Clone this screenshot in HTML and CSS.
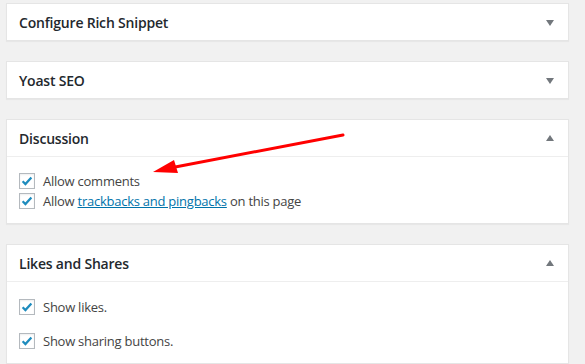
FILE: index.html
```html
<!DOCTYPE html>
<html lang="en">
<head>
  <meta charset="UTF-8" />
  <title>Post boxes</title>
  <link rel="stylesheet" href="styles.css">
</head>
<body>
  <div class="boxes">
    <div class="postbox closed">
      <h2>Configure Rich Snippet <span class="toggle down"></span></h2>
    </div>

    <div class="postbox closed">
      <h2>Yoast SEO <span class="toggle down"></span></h2>
    </div>

    <div class="postbox">
      <h2>Discussion <span class="toggle up"></span></h2>
      <div class="inside discussion">
        <label class="check">
          <span class="box"><svg viewBox="0 0 16 16" width="14" height="14"><path d="M3 8.2l3.2 3.3L13 4" fill="none" stroke="#1e8cbe" stroke-width="2.6"/></svg></span>
          <span>Allow comments</span>
        </label>
        <label class="check">
          <span class="box"><svg viewBox="0 0 16 16" width="14" height="14"><path d="M3 8.2l3.2 3.3L13 4" fill="none" stroke="#1e8cbe" stroke-width="2.6"/></svg></span>
          <span>Allow <a href="#">trackbacks and pingbacks</a> on this page</span>
        </label>
      </div>
    </div>

    <div class="postbox">
      <h2>Likes and Shares <span class="toggle up"></span></h2>
      <div class="inside likes">
        <label class="check">
          <span class="box"><svg viewBox="0 0 16 16" width="14" height="14"><path d="M3 8.2l3.2 3.3L13 4" fill="none" stroke="#1e8cbe" stroke-width="2.6"/></svg></span>
          <span>Show likes.</span>
        </label>
        <label class="check">
          <span class="box"><svg viewBox="0 0 16 16" width="14" height="14"><path d="M3 8.2l3.2 3.3L13 4" fill="none" stroke="#1e8cbe" stroke-width="2.6"/></svg></span>
          <span>Show sharing buttons.</span>
        </label>
      </div>
    </div>
  </div>

  <!-- red annotation arrow pointing at "Allow comments" -->
  <svg class="arrow" width="585" height="364" viewBox="0 0 585 364">
    <line x1="343" y1="135" x2="170" y2="168" stroke="#f00" stroke-width="3" stroke-linecap="round"/>
    <polygon points="153,172 174,160 178,173" fill="#f00"/>
  </svg>
</body>
</html>
```

FILE: styles.css
```css
body {
  margin: 0;
  background-color: #f1f1f1;
  font-family: "Open Sans", "Noto Sans", sans-serif;
  color: #444;
  font-size: 13px;
  position: relative;
  height: 364px;
  overflow: hidden;
}

.boxes {
  padding: 3px 16px 0 6px;
}

.postbox {
  background-color: #fff;
  border: 1px solid #e5e5e5;
  box-shadow: 0 1px 1px rgba(0,0,0,0.04);
  margin-bottom: 20px;
}

.postbox h2 {
  display: flex;
  justify-content: space-between;
  align-items: center;
  margin: 0;
  height: 36px;
  padding: 0 14px 0 12px;
  font-size: 14px;
  font-weight: 600;
  color: #23282d;
  letter-spacing: -0.2px;
}

.postbox:not(.closed) h2 {
  border-bottom: 1px solid #eee;
}

.toggle {
  width: 0;
  height: 0;
  border-left: 4px solid transparent;
  border-right: 4px solid transparent;
}

.toggle.down {
  border-top: 6px solid #72777c;
  margin-top: 2px;
}

.toggle.up {
  border-bottom: 6px solid #72777c;
}

.inside {
  display: flex;
  flex-direction: column;
  gap: 4px;
  padding: 16px 12px 14px 12px;
}

.check {
  display: flex;
  align-items: center;
  gap: 8px;
  height: 16px;
  letter-spacing: -0.25px;
}

.likes {
  padding-top: 17px;
  gap: 18px;
}

.box {
  width: 14px;
  height: 14px;
  border: 1px solid #b4b9be;
  background-color: #fff;
  box-shadow: inset 0 1px 2px rgba(0,0,0,0.07);
  display: flex;
  align-items: center;
  justify-content: center;
  flex-shrink: 0;
}

.check a {
  color: #0073aa;
  text-decoration: underline;
}

.arrow {
  position: absolute;
  top: 0;
  left: 0;
  pointer-events: none;
}
```
